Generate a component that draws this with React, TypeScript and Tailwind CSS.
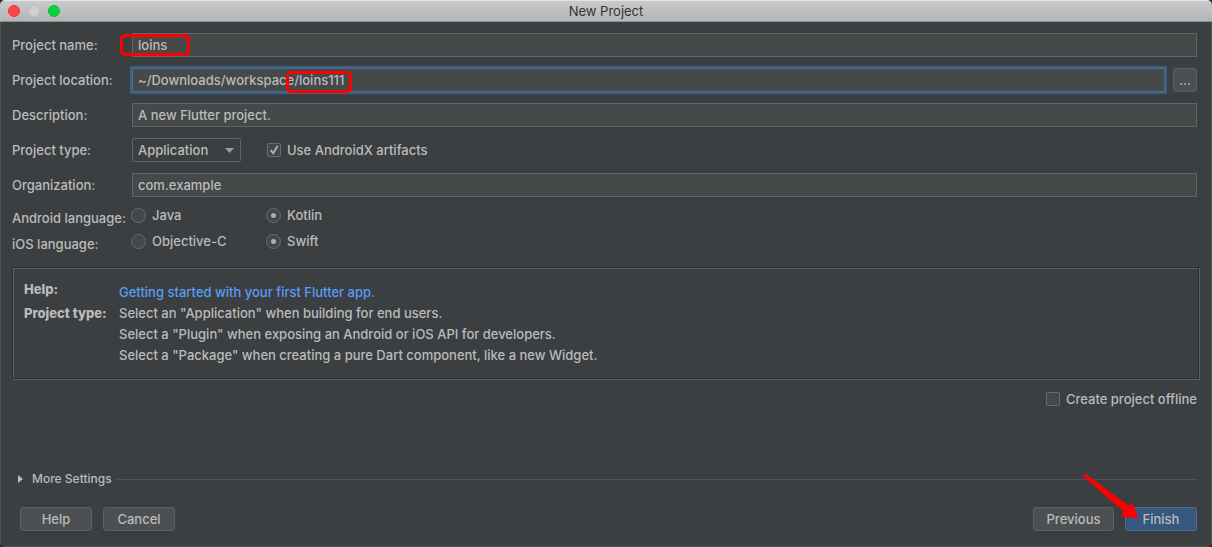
import type { InputHTMLAttributes, ReactNode } from "react";

const buttonCls =
  "h-6 rounded-[3px] border border-[#5e6060] bg-[#4c5052] text-center shadow-[0_1px_0_#36393b]";

function TextField(props: InputHTMLAttributes<HTMLInputElement>) {
  return (
    <input
      type="text"
      className="h-6 w-full min-w-0 border border-[#646464] bg-[#45494a] px-[5px] outline-none"
      {...props}
    />
  );
}

function Row({ id, label, children }: { id: string; label: string; children: ReactNode }) {
  return (
    <>
      <label htmlFor={id}>{label}</label>
      <div className="relative flex h-6 items-center">{children}</div>
    </>
  );
}

function CheckBox({ label, checked }: { label: string; checked?: boolean }) {
  return (
    <label className="flex items-center gap-[6px]">
      <span className="grid size-[14px]">
        <input
          type="checkbox"
          defaultChecked={checked}
          className="peer col-start-1 row-start-1 size-[14px] appearance-none rounded-[2px] border border-[#6b6b6b] bg-[#43494a]"
        />
        <svg
          viewBox="0 0 14 14"
          className="pointer-events-none invisible col-start-1 row-start-1 size-[14px] peer-checked:visible"
          fill="none"
          stroke="#b4b4b4"
          strokeWidth="1.8"
        >
          <path d="M3.6 7.2 L6.2 10.2 L10.6 3" />
        </svg>
      </span>
      {label}
    </label>
  );
}

function Radio({ name, label, checked }: { name: string; label: string; checked?: boolean }) {
  return (
    <label className="flex h-5 items-center gap-[6px]">
      <input
        type="radio"
        name={name}
        defaultChecked={checked}
        className="size-[15px] appearance-none rounded-full border border-[#6b6b6b] bg-[#43494a] checked:bg-[radial-gradient(circle,#adadad_2px,#43494a_3px)]"
      />
      {label}
    </label>
  );
}

function LanguageRow({ title, name, options }: { title: string; name: string; options: [string, string] }) {
  return (
    <fieldset className="grid h-[26px] grid-cols-[119px_135px_1fr] items-start">
      <legend className="contents">
        <span className="h-[26px] whitespace-nowrap leading-[26px]">{title}</span>
      </legend>
      <Radio name={name} label={options[0]} />
      <Radio name={name} label={options[1]} checked />
    </fieldset>
  );
}

export default function App() {
  return (
    <div className="flex min-h-screen flex-col bg-[#2b2d2f] font-['Inter','Liberation_Sans',sans-serif] text-[13px] leading-4 font-medium text-[#bbbbbb]">
      <div className="flex flex-1 flex-col overflow-hidden rounded-[5px] bg-[#3c3f41]">
        <header className="grid h-[22px] grid-cols-[1fr_auto_1fr] items-center border-t border-b border-t-[#e4e4e4] border-b-[#8f9091] bg-linear-to-b from-[#c9cbca] to-[#b4b5b6] px-2">
          <div className="flex gap-2">
            <button aria-label="Close" className="size-3 rounded-full border border-[#e2383a] bg-[#fc4548]" />
            <button aria-label="Minimize" className="size-3 rounded-full border border-[#bfbfbf] bg-[#cfcfcf]" />
            <button aria-label="Zoom" className="size-3 rounded-full border border-[#12b93a] bg-[#08d33f]" />
          </div>
          <h1 className="font-normal text-[#333333]">New Project</h1>
        </header>

        <main className="flex flex-1 flex-col border-x border-b border-[#505355] pt-[11px] pr-[14px] pb-[15px] pl-[11px]">
          <div className="grid grid-cols-[120px_1fr] items-center gap-y-[11px]">
            <Row id="name" label="Project name:">
              <TextField id="name" defaultValue="loins" />
              <span className="pointer-events-none absolute top-px -left-3 h-[22px] w-[70px] rounded-[5px] border-3 border-[#ff0000]" />
            </Row>
            <Row id="location" label="Project location:">
              <input
                id="location"
                type="text"
                defaultValue="~/Downloads/workspace/loins111"
                className="h-6 min-w-0 flex-1 border border-[#466d94] bg-[#45494a] px-[5px] ring-2 ring-[#3d6185] outline-none"
              />
              <button aria-label="Browse" className={buttonCls + " ml-2 w-6"}>
                ...
              </button>
              <span className="pointer-events-none absolute top-[3px] left-[154px] h-[22px] w-[66px] rounded-[5px] border-3 border-[#ff0000]" />
            </Row>
            <Row id="description" label="Description:">
              <TextField id="description" defaultValue="A new Flutter project." />
            </Row>
            <Row id="type" label="Project type:">
              <div className="grid w-[109px] items-center">
                <select
                  id="type"
                  className="col-start-1 row-start-1 h-6 appearance-none rounded-[2px] border border-[#646464] bg-[#3c3f41] px-[5px]"
                >
                  <option>Application</option>
                  <option>Plugin</option>
                  <option>Package</option>
                </select>
                <svg viewBox="0 0 9 5" className="pointer-events-none col-start-1 row-start-1 mr-[7px] h-[5px] w-[9px] justify-self-end fill-[#9a9da0]">
                  <path d="M0 0h9L4.5 5z" />
                </svg>
              </div>
              <div className="ml-[26px]">
                <CheckBox label="Use AndroidX artifacts" checked />
              </div>
            </Row>
            <Row id="organization" label="Organization:">
              <TextField id="organization" defaultValue="com.example" />
            </Row>
          </div>

          <div className="mt-2">
            <LanguageRow title="Android language:" name="android" options={["Java", "Kotlin"]} />
            <LanguageRow title="iOS language:" name="ios" options={["Objective-C", "Swift"]} />
          </div>

          <section className="-mr-0.5 mt-[10px] grid grid-cols-[95px_1fr] border border-[#2d2f31] px-[11px] pt-[11px] pb-3 leading-[21px] shadow-[1px_1px_0_#5b5e60,inset_1px_1px_0_#5b5e60]">
            <strong className="font-extrabold">Help:</strong>
            <a href="#getting-started" className="pt-[3px] text-[#589df6]">
              Getting started with your first Flutter app.
            </a>
            <strong className="font-extrabold">Project type:</strong>
            <div>
              <p>Select an "Application" when building for end users.</p>
              <p>Select a "Plugin" when exposing an Android or iOS API for developers.</p>
              <p>Select a "Package" when creating a pure Dart component, like a new Widget.</p>
            </div>
          </section>

          <div className="mt-3 flex justify-end">
            <CheckBox label="Create project offline" />
          </div>

          <div className="mt-auto flex items-center text-xs">
            <button className="flex items-center gap-[9px] pl-[6px]">
              <svg viewBox="0 0 5 8" className="h-2 w-[5px] fill-[#bbbbbb]">
                <path d="M0 0L5 4L0 8z" />
              </svg>
              More Settings
            </button>
            <hr className="ml-[5px] flex-1 border-[#515456]" />
          </div>

          <footer className="mt-5 flex gap-[11px] pl-2">
            <button className={buttonCls + " w-[72px]"}>Help</button>
            <button className={buttonCls + " w-[72px]"}>Cancel</button>
            <button className={buttonCls + " ml-auto w-[81px]"}>Previous</button>
            <div className="relative">
              <button className="h-6 w-[72px] rounded-[3px] border border-[#4c708c] bg-[#365880]">Finish</button>
              <svg
                viewBox="0 0 60 48"
                className="pointer-events-none absolute -top-[34px] -left-[43px] h-12 w-[60px] fill-[#ff0000]"
              >
                <path d="M1.2 1.4 Q2.4 0.2 4.2 1.4 L47 33 L50.3 29.3 L56.4 45.4 L38.6 43.4 L42 38.6 Q20 20 1.6 3.4 Q0.6 2.4 1.2 1.4z" />
              </svg>
            </div>
          </footer>
        </main>
      </div>
    </div>
  );
}
